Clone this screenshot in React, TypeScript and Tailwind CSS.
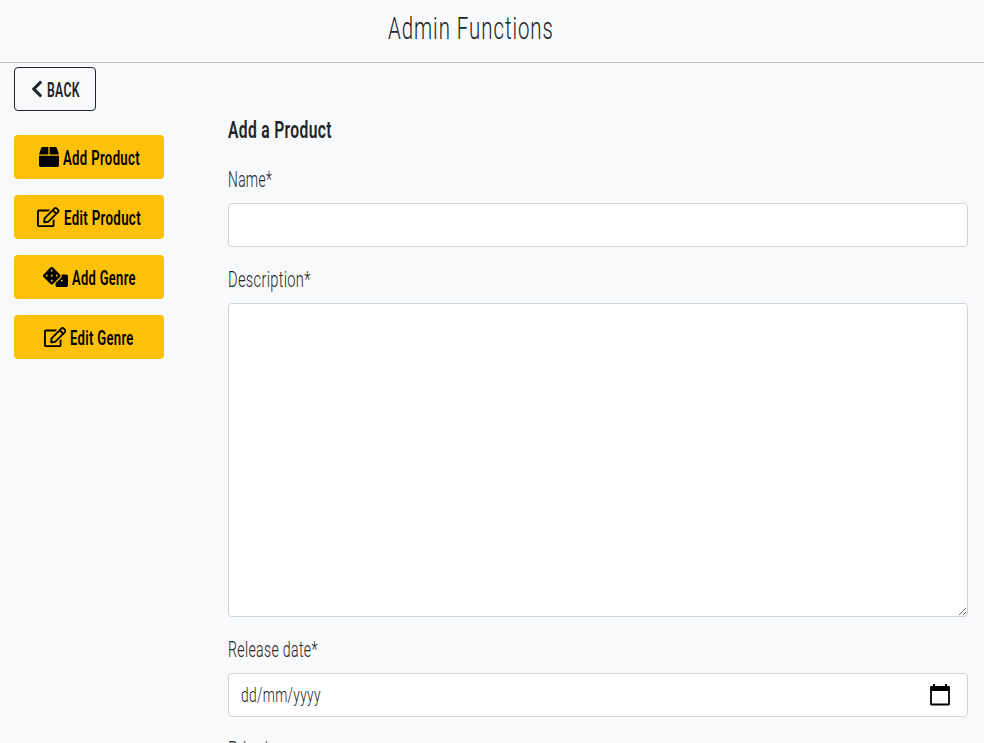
import { useLayoutEffect, useRef, useState } from "react";
import { FaBox, FaChevronLeft, FaDice, FaRegEdit } from "react-icons/fa";

// Condensed lettering: squeezes the text horizontally into the given width.
function Condensed({ text, width, className = "" }: { text: string; width: number; className?: string }) {
  const ref = useRef<HTMLSpanElement>(null);
  const [scale, setScale] = useState(0.7);
  useLayoutEffect(() => {
    if (ref.current) setScale(width / ref.current.offsetWidth);
  }, [width]);
  return (
    <span className={`inline-block whitespace-nowrap ${className}`} style={{ width }}>
      <span ref={ref} className="inline-block origin-left" style={{ transform: `scaleX(${scale})` }}>
        {text}
      </span>
    </span>
  );
}

const actions = [
  { label: "Add Product", width: 77, icon: <FaBox size={20} /> },
  { label: "Edit Product", width: 77, icon: <FaRegEdit className="h-5 w-[22.5px]" /> },
  { label: "Add Genre", width: 64, icon: <FaDice className="h-5 w-[25px]" /> },
  { label: "Edit Genre", width: 64, icon: <FaRegEdit className="h-5 w-[22.5px]" /> },
];

const field = "block w-full rounded border border-[#ced4da] bg-white outline-none";

function Label({ text, width }: { text: string; width: number }) {
  return (
    <label className="flex h-8 text-[22px] leading-[33px] font-[350] tracking-[0.5px]">
      <Condensed text={text} width={width} />
    </label>
  );
}

export default function App() {
  return (
    <div className="h-[743px] w-[984px] overflow-hidden bg-[#f8f9fa] font-['Roboto','Liberation_Sans',sans-serif] text-[#212529]">
      <header className="flex h-[63px] justify-center border-b border-[#c0c2c4] pr-[43px] text-[32px] leading-[56px] font-[350] tracking-[1.5px]">
        <Condensed text="Admin Functions" width={166} />
      </header>
      <div className="flex">
        <aside className="flex w-[228px] flex-col items-start pt-1 pl-3.5">
          <button className="mb-6 flex h-11 w-[82px] items-center justify-center gap-1 rounded border border-[#212529] text-[20px] leading-[44px] font-semibold tracking-[0.5px]">
            <FaChevronLeft className="h-5 w-[12px]" />
            <Condensed text="BACK" width={33} className="mt-0.5" />
          </button>
          <div className="flex flex-col gap-4">
            {actions.map((a) => (
              <button
                key={a.label}
                className="flex h-11 w-[150px] items-center justify-center gap-1 rounded bg-[#ffc107] text-[20px] leading-[44px] font-semibold tracking-[0.5px] text-black"
              >
                {a.icon}
                <Condensed text={a.label} width={a.width} className="mt-0.5" />
              </button>
            ))}
          </div>
        </aside>
        <main className="w-[740px] pt-[50px]">
          <h2 className="flex h-[34px] text-[23px] leading-[36px] font-semibold tracking-[0.5px]">
            <Condensed text="Add a Product" width={104} />
          </h2>
          <div className="mt-4">
            <Label text="Name*" width={44} />
            <input className={`${field} mt-2 h-11`} />
          </div>
          <div className="mt-4">
            <Label text="Description*" width={83} />
            <textarea className={`${field} mt-2 h-[314px]`} />
          </div>
          <div className="mt-4">
            <Label text="Release date*" width={90} />
            <div className={`${field} mt-2 flex h-11 items-center justify-between pr-[17px] pl-3 text-[20px] leading-[42px] font-[350] tracking-[0.5px]`}>
              <Condensed text="dd/mm/yyyy" width={80} />
              <svg className="h-[22px] w-5" viewBox="0 0 20 22" fill="none">
                <path d="M0 2.5h20V7H0zM3 0h2v3H3zM15 0h2v3h-2z" fill="black" />
                <rect x="1" y="3" width="18" height="17.5" rx="0.5" stroke="black" strokeWidth="1.8" />
              </svg>
            </div>
          </div>
          <div className="mt-4">
            <Label text="Price*" width={42} />
          </div>
        </main>
      </div>
    </div>
  );
}
